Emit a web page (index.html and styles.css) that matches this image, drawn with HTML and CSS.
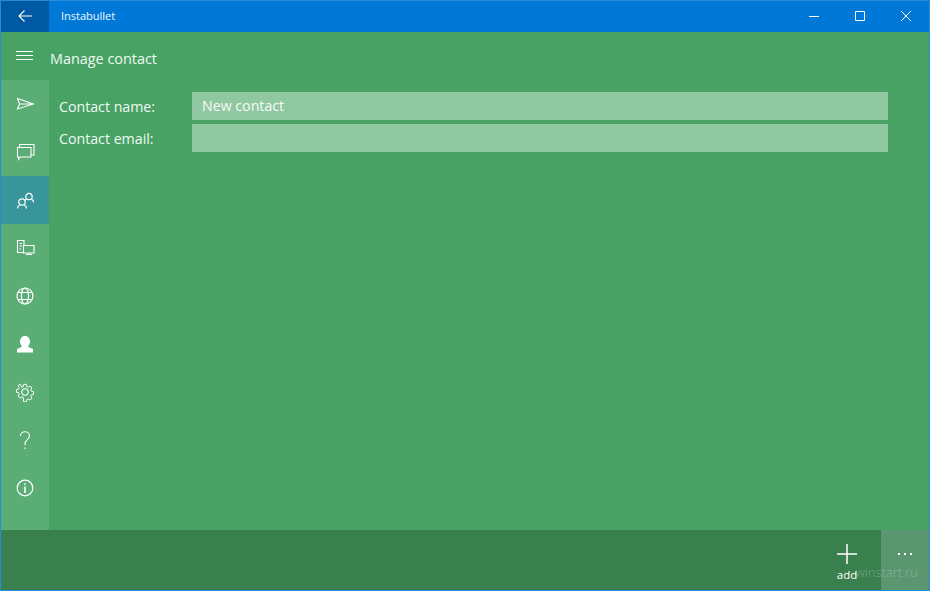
FILE: index.html
```html
<!DOCTYPE html>
<html>
<head>
    <meta charset="utf-8">
    <title>Instabullet</title>
    <link rel="stylesheet" href="styles.css">
</head>
<body>
    <div id="window">
        <div class="titlebar">
            <div class="back">
                <svg width="14" height="14" viewBox="0 0 14 14" fill="none" stroke="#fff" stroke-width="1.1"><path d="M1 7h13M6.500 1.500 1 7l5.500 5.500"/></svg>
            </div>
            <div class="app-name">Instabullet</div>
            <div class="caption">
                <div class="cap-btn"><svg width="12" height="12" viewBox="0 0 12 12" fill="none" stroke="#fff"><path d="M1 6.500h10"/></svg></div>
                <div class="cap-btn"><svg width="12" height="12" viewBox="0 0 12 12" fill="none" stroke="#fff"><path d="M1.500 1.500h9v9h-9z"/></svg></div>
                <div class="cap-btn"><svg width="12" height="12" viewBox="0 0 12 12" fill="none" stroke="#fff"><path d="M1 1l10 10M11 1 1 11"/></svg></div>
            </div>
        </div>
        <div class="page-head">
            <div class="burger">
                <svg width="18" height="12" viewBox="0 0 18 12" fill="none" stroke="#fff"><path d="M0 1.500h17M0 5.500h17M0 9.500h17"/></svg>
            </div>
            <div class="page-title">Manage contact</div>
        </div>
        <div class="middle">
            <div class="rail">
                <div class="rail-item">
                    <svg width="20" height="20" viewBox="0 0 20 20" fill="none" stroke="#fff" stroke-width="1.100"><path d="M2.500 4.500 18.500 10l-16 5 2-5zM4.500 10h14"/></svg>
                </div>
                <div class="rail-item">
                    <svg width="20" height="20" viewBox="0 0 20 20" fill="none" stroke="#fff" stroke-width="1.100"><path d="M4.500 5V2.500h14.500V13H16M2.500 5.500H16V15H5.500l-2 2.500V15h-1z"/></svg>
                </div>
                <div class="rail-item active">
                    <svg width="20" height="20" viewBox="0 0 20 20" fill="none" stroke="#fff" stroke-width="1.200"><circle cx="14" cy="6.500" r="3.200"/><circle cx="7" cy="12" r="3.200"/><path d="M2.500 18.500c0-1.500.7-2.700 2-3.500M11.500 18.500c0-1.500-.7-2.700-2-3.500M18.500 12.500c0-1.500-.7-2.700-2-3.500M11.500 9c-.7.400-1.200.9-1.600 1.500"/></svg>
                </div>
                <div class="rail-item">
                    <svg width="20" height="20" viewBox="0 0 20 20" fill="none" stroke="#fff" stroke-width="1.100"><path d="M8.500 14.500h-6v-12H9V7M4.500 5.500H7M4.500 8H7M4.500 11H6M8.500 7.500h10.500v7.500H8.500zM11 16.500h6M14 15v1.500"/></svg>
                </div>
                <div class="rail-item">
                    <svg width="20" height="20" viewBox="0 0 20 20" fill="none" stroke="#fff" stroke-width="1.200"><circle cx="10" cy="10" r="8"/><ellipse cx="10" cy="10" rx="3.600" ry="8"/><path d="M3 6.500h14M3 13.500h14"/></svg>
                </div>
                <div class="rail-item">
                    <svg width="20" height="20" viewBox="0 0 20 20" fill="#fff"><ellipse cx="10" cy="7.500" rx="5" ry="5.800"/><path d="M7 11.500h6l.5 1.500 4.500 2v3.500H2V15l4.500-2z"/></svg>
                </div>
                <div class="rail-item">
                    <svg width="20" height="20" viewBox="0 0 20 20" fill="none" stroke="#fff" stroke-width="1.100"><circle cx="10" cy="10" r="3.200"/><path d="M8.500 1.500h3l.5 2.500 1.500.7 2.200-1.300 2 2.100-1.300 2.100.6 1.500 2.500.6v3l-2.500.6-.6 1.500 1.300 2.100-2 2.100-2.200-1.300-1.500.7-.5 2.500h-3L8 16l-1.500-.7-2.200 1.300-2-2.100 1.300-2.100-.6-1.500-2.500-.6v-3l2.500-.6.6-1.500-1.300-2.100 2-2.100L6.500 4.700 8 4z" transform="translate(1 1) scale(.9)"/></svg>
                </div>
                <div class="rail-item">
                    <svg width="20" height="20" viewBox="0 0 20 20" fill="none" stroke="#fff" stroke-width="1.100"><path d="M5.500 6C5.500 3.500 7.500 1.700 10 1.700s4.500 1.700 4.500 4c0 3.800-4.500 4-4.500 8v1.500M10 17.500v1.500"/></svg>
                </div>
                <div class="rail-item">
                    <svg width="20" height="20" viewBox="0 0 20 20" fill="none" stroke="#fff" stroke-width="1.200"><circle cx="10" cy="10" r="7.800"/><path d="M10 8.500V15" stroke-width="1.600"/><path d="M10 5.200v1.600" stroke-width="1.600"/></svg>
                </div>
            </div>
            <div class="content">
                <div class="form-row">
                    <label class="form-label">Contact name:</label>
                    <div class="form-input">New contact</div>
                </div>
                <div class="form-row">
                    <label class="form-label">Contact email:</label>
                    <div class="form-input"></div>
                </div>
            </div>
        </div>
        <div class="appbar">
            <div class="app-btn">
                <svg width="22" height="22" viewBox="0 0 22 22" fill="none" stroke="#fff" stroke-width="1.500"><path d="M11 1v20M1 11h20"/></svg>
                <span class="app-btn-label">add</span>
            </div>
            <div class="more">
                <svg width="16" height="4" viewBox="0 0 16 4" fill="#fff"><rect x="1" y="1" width="2" height="2"/><rect x="7" y="1" width="2" height="2"/><rect x="13" y="1" width="2" height="2"/></svg>
            </div>
        </div>
        <div class="watermark">winstart.ru</div>
    </div>
</body>
</html>
```

FILE: styles.css
```css
html, body {
    margin: 0;
    padding: 0;
}
body {
    width: 930px;
    height: 591px;
    overflow: hidden;
    font-family: "Open Sans", "Noto Sans", sans-serif;
    color: #fff;
}
#window {
    position: relative;
    box-sizing: border-box;
    width: 930px;
    height: 591px;
    border: 1px solid #2a8ad8;
    background-color: #47a264;
    display: flex;
    flex-direction: column;
}
.titlebar {
    height: 31px;
    flex: none;
    display: flex;
    background-color: #0078d7;
}
.back {
    width: 48px;
    height: 31px;
    padding-bottom: 1px;
    box-sizing: border-box;
    display: flex;
    align-items: center;
    justify-content: center;
    background-color: #0059a3;
}
.app-name {
    margin-left: 12px;
    font-size: 11px;
    line-height: 29px;
    color: #f2f8fd;
}
.caption {
    margin-left: auto;
    display: flex;
}
.cap-btn {
    width: 46px;
    height: 30px;
    display: flex;
    align-items: center;
    justify-content: center;
}
.page-head {
    height: 48px;
    flex: none;
    display: flex;
    align-items: center;
}
.burger {
    width: 48px;
    height: 12px;
    display: flex;
    justify-content: center;
}
.page-title {
    margin-left: 1px;
    padding-top: 4px;
    font-size: 14.400px;
    color: #f0f8f2;
}
.middle {
    flex: 1;
    display: flex;
    min-height: 0;
}
.rail {
    width: 48px;
    flex: none;
    background-color: #5aad75;
}
.rail-item {
    height: 48px;
    display: flex;
    align-items: center;
    justify-content: center;
}
.rail-item.active {
    background-color: #38969a;
}
.content {
    flex: 1;
    padding: 12px 41px 0 10px;
    display: flex;
    flex-direction: column;
    gap: 4px;
}
.form-row {
    display: flex;
    align-items: center;
    height: 28px;
}
.form-label {
    width: 133px;
    flex: none;
    font-size: 14.200px;
    color: #f0f8f2;
}
.form-input {
    flex: 1;
    height: 28px;
    line-height: 27px;
    padding-left: 10px;
    font-size: 14.200px;
    background-color: #90c8a2;
    color: #f6fbf7;
}
.appbar {
    height: 60px;
    flex: none;
    display: flex;
    justify-content: flex-end;
    background-color: #3a7f4e;
}
.app-btn {
    width: 68px;
    display: flex;
    flex-direction: column;
    align-items: center;
    padding-top: 13px;
    box-sizing: border-box;
}
.app-btn-label {
    font-size: 11.500px;
    line-height: 14px;
    margin-top: 3px;
}
.more {
    width: 48px;
    display: flex;
    justify-content: center;
    padding-top: 22px;
    box-sizing: border-box;
    background-color: #5a9670;
}
.watermark {
    position: absolute;
    right: 11px;
    bottom: 9px;
    font-size: 13px;
    font-weight: 300;
    line-height: 18px;
    color: rgba(255, 255, 255, 0.3);
}
```
